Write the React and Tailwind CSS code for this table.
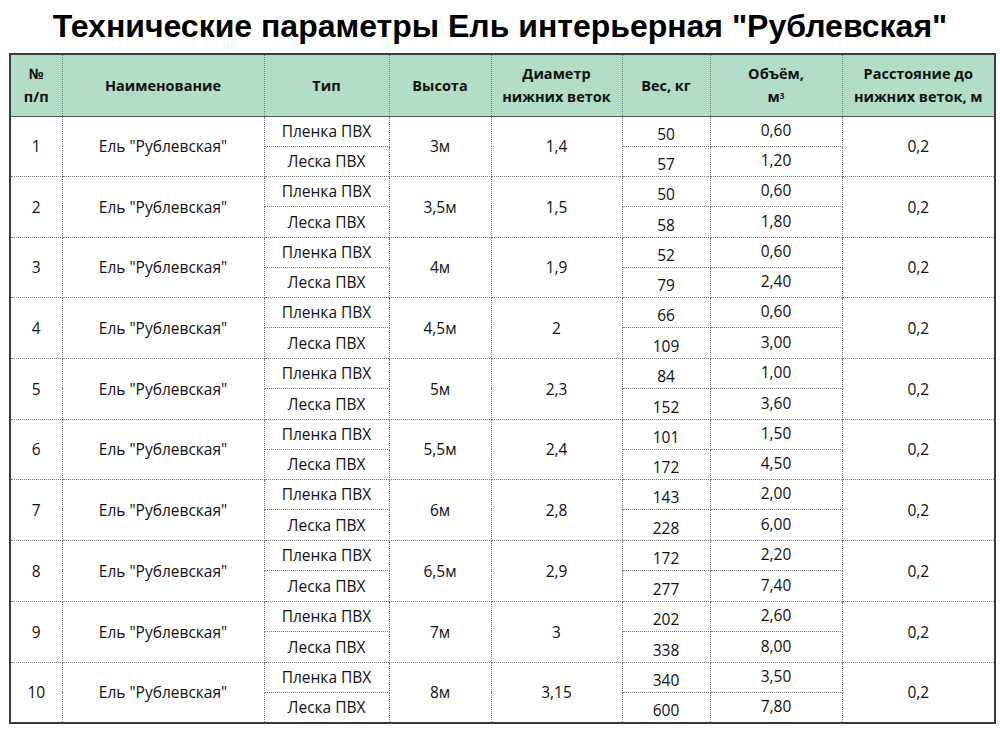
const rows = [
  { n: 1, h: "3м", d: "1,4", w: ["50", "57"], v: ["0,60", "1,20"] },
  { n: 2, h: "3,5м", d: "1,5", w: ["50", "58"], v: ["0,60", "1,80"] },
  { n: 3, h: "4м", d: "1,9", w: ["52", "79"], v: ["0,60", "2,40"] },
  { n: 4, h: "4,5м", d: "2", w: ["66", "109"], v: ["0,60", "3,00"] },
  { n: 5, h: "5м", d: "2,3", w: ["84", "152"], v: ["1,00", "3,60"] },
  { n: 6, h: "5,5м", d: "2,4", w: ["101", "172"], v: ["1,50", "4,50"] },
  { n: 7, h: "6м", d: "2,8", w: ["143", "228"], v: ["2,00", "6,00"] },
  { n: 8, h: "6,5м", d: "2,9", w: ["172", "277"], v: ["2,20", "7,40"] },
  { n: 9, h: "7м", d: "3", w: ["202", "338"], v: ["2,60", "8,00"] },
  { n: 10, h: "8м", d: "3,15", w: ["340", "600"], v: ["3,50", "7,80"] },
];

const cols = [52, 202, 125, 102, 131, 88, 132, 153];

const cell = "border border-dotted border-[#7a7a7a] text-center align-middle p-0 leading-[20px]";
const head = "border border-dotted border-[#7a7a7a] text-center align-middle font-bold text-[14.5px] leading-[23px] px-1";

export default function App() {
  return (
    <div className="w-[1000px] h-[731px] bg-white text-[#111]" style={{ fontFamily: "'Open Sans', sans-serif" }}>
      <h1
        className="text-center font-bold text-[32px] leading-[52px] text-black"
        style={{ fontFamily: "'Liberation Sans', Arial, sans-serif" }}
      >
        Технические параметры Ель интерьерная "Рублевская"
      </h1>
      <table className="ml-[9px] mt-[1px] w-[985px] table-fixed border-collapse border-2 border-[#3a3a3a] text-[15.5px]">
        <colgroup>
          {cols.map((c, i) => (
            <col key={i} style={{ width: c }} />
          ))}
        </colgroup>
        <thead>
          <tr className="h-[62px] bg-[#b2ddc6] border-b border-solid border-b-[#555]">
            <th className={head}>
              №
              <br />
              п/п
            </th>
            <th className={head}>Наименование</th>
            <th className={head}>Тип</th>
            <th className={head}>Высота</th>
            <th className={head}>
              Диаметр
              <br />
              нижних веток
            </th>
            <th className={head}>Вес, кг</th>
            <th className={head}>
              Объём,
              <br />
              м<sup className="text-[8px] relative -top-[3px]">3</sup>
            </th>
            <th className={head}>
              Расстояние до
              <br />
              нижних веток, м
            </th>
          </tr>
        </thead>
        <tbody>
          {rows.map((r, i) => [
            <tr key={r.n + "a"} className="h-[30px]">
              <td rowSpan={2} className={cell}>{r.n}</td>
              <td rowSpan={2} className={cell}>Ель "Рублевская"</td>
              <td className={cell}>Пленка ПВХ</td>
              <td rowSpan={2} className={cell}>{r.h}</td>
              <td rowSpan={2} className={cell}>{r.d}</td>
              <td className={cell + " pt-[6px]"}>{r.w[0]}</td>
              <td className={cell + " pb-[2px]"}>{r.v[0]}</td>
              <td rowSpan={2} className={cell}>0,2</td>
            </tr>,
            <tr key={r.n + "b"} className={i === 0 || i === 2 || i === 5 ? "h-[30px]" : "h-[31px]"}>
              <td className={cell}>Леска ПВХ</td>
              <td className={cell + " pt-[6px]"}>{r.w[1]}</td>
              <td className={cell + " pb-[2px]"}>{r.v[1]}</td>
            </tr>,
          ])}
        </tbody>
      </table>
    </div>
  );
}
